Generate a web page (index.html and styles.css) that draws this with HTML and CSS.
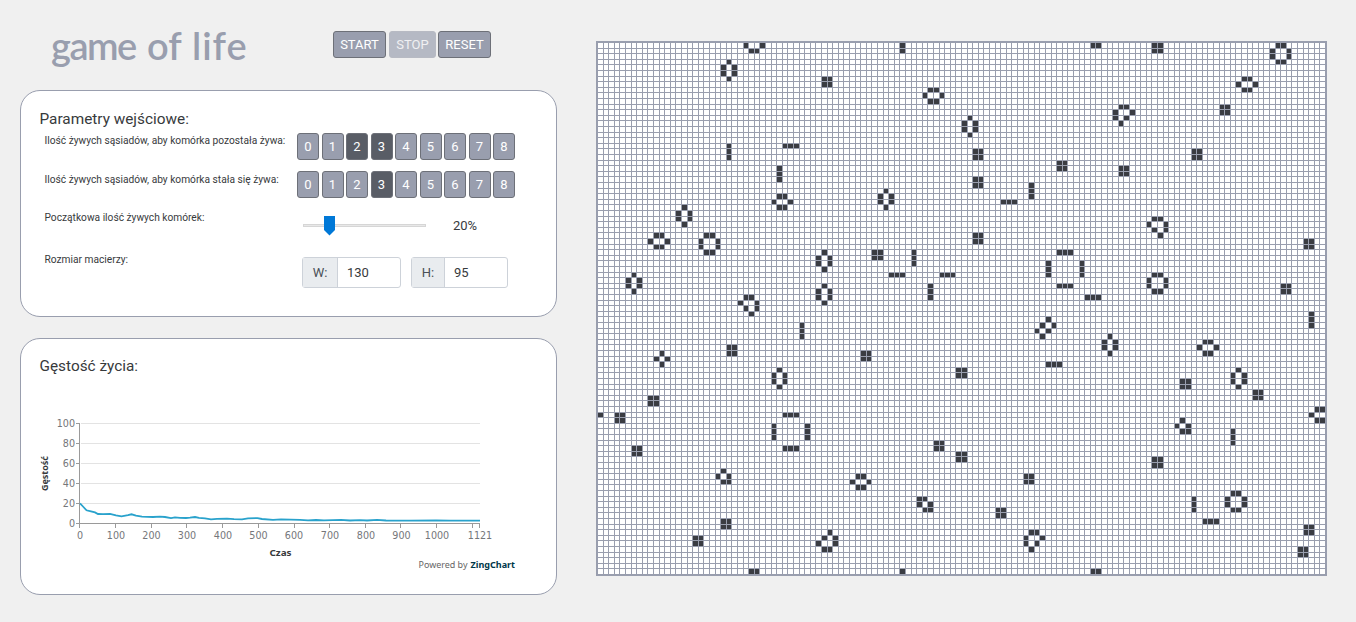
FILE: index.html
```html
<!DOCTYPE html>
<html lang="pl">
<head>
<meta charset="utf-8">
<title>game of life</title>
<link rel="stylesheet" href="styles.css">
</head>
<body>
<div class="page">
  <div class="side">
    <header class="top">
      <h1 class="logo"><span class="w1">game</span><span class="w2">of</span><span class="w3">life</span></h1>
      <div class="actions">
        <button class="btn start">START</button>
        <button class="btn stop" disabled>STOP</button>
        <button class="btn reset">RESET</button>
      </div>
    </header>

    <section class="panel params">
      <h2 class="heading">Parametry wejściowe:</h2>
      <div class="row survive">
        <span class="label">Ilość żywych sąsiadów, aby komórka pozostała żywa:</span>
        <div class="digits">
          <button class="digit">0</button><button class="digit">1</button><button class="digit on">2</button><button class="digit on">3</button><button class="digit">4</button><button class="digit">5</button><button class="digit">6</button><button class="digit">7</button><button class="digit">8</button>
        </div>
      </div>
      <div class="row birth">
        <span class="label">Ilość żywych sąsiadów, aby komórka stała się żywa:</span>
        <div class="digits">
          <button class="digit">0</button><button class="digit">1</button><button class="digit">2</button><button class="digit on">3</button><button class="digit">4</button><button class="digit">5</button><button class="digit">6</button><button class="digit">7</button><button class="digit">8</button>
        </div>
      </div>
      <div class="row density">
        <span class="label">Początkowa ilość żywych komórek:</span>
        <svg class="slider" width="124" height="20" viewBox="0 0 124 20">
          <rect x="0.5" y="8.5" width="122" height="2" fill="#e8e8e8" stroke="#d6d6d6"/>
          <path d="M21 0H32V14L26.5 19.5L21 14Z" fill="#0078d7"/>
        </svg>
        <span class="percent">20%</span>
      </div>
      <div class="row size">
        <span class="label">Rozmiar macierzy:</span>
        <div class="group gw"><span class="addon">W:</span><span class="field">130</span></div>
        <div class="group gh"><span class="addon">H:</span><span class="field">95</span></div>
      </div>
    </section>

    <section class="panel life">
      <h2 class="heading">Gęstość życia:</h2>
      <svg class="chart" width="490" height="170" viewBox="36 410 490 170">
        <path class="guide" d="M81 423.5H480M81 443.5H480M81 463.5H480M81 483.5H480M81 503.5H480"/>
        <path class="axis" d="M79.5 423V524M76 423.5H79M76 443.5H79M76 463.5H79M76 483.5H79M76 503.5H79M76 523.5H480M79.5 524V528M115.5 524V528M151.5 524V528M186.5 524V528M222.5 524V528M258.5 524V528M294.5 524V528M329.5 524V528M365.5 524V528M400.5 524V528M436.5 524V528M472.5 524V528M479.5 524V528"/>
        <polyline class="series" points="80,503.3 83,506.5 86.5,510.3 91,511.3 95,512.4 98,514 103,514.2 110,513.9 116,515.3 121.5,516.4 128,515.2 131.5,514.3 136,515.7 142,516.6 153,517 160,516.7 165,517 171,518.2 175,517.4 180,517.9 186,518 190,517.7 195,517 199,517.9 205,518.4 211,519.4 217,518.9 227,518.7 234,519.2 242,519.3 248,518.4 257.5,518.1 262,519 273,519.9 281,519.3 300,519.8 308,520.3 316,520 324,520.4 341,519.8 350,520.5 360,520.1 367,520.5 377,519.9 386,520.5 410,520.6 436,520.3 450,520.6 480,520.6"/>
        <g class="tick end">
          <text x="75" y="427">100</text><text x="75" y="447">80</text><text x="75" y="467">60</text><text x="75" y="487">40</text><text x="75" y="507">20</text><text x="75" y="527">0</text>
        </g>
        <g class="tick mid">
          <text x="80" y="539">0</text><text x="116" y="539">100</text><text x="151.5" y="539">200</text><text x="187" y="539">300</text><text x="223" y="539">400</text><text x="258.5" y="539">500</text><text x="294" y="539">600</text><text x="330" y="539">700</text><text x="366" y="539">800</text><text x="401.5" y="539">900</text><text x="437" y="539">1000</text><text x="480" y="539">1121</text>
        </g>
        <text class="caption" x="280.5" y="556" textLength="22" lengthAdjust="spacingAndGlyphs">Czas</text>
        <text class="caption" transform="translate(47.5 473.5) rotate(-90)" textLength="35" lengthAdjust="spacingAndGlyphs">Gęstość</text>
        <text class="credit" x="418.5" y="568" textLength="49" lengthAdjust="spacingAndGlyphs">Powered by</text>
        <text class="credit brand" x="470.5" y="568" textLength="44.5" lengthAdjust="spacingAndGlyphs">ZingChart</text>
      </svg>
    </section>
  </div>
  <svg class="board" id="board" width="731" height="535" shape-rendering="crispEdges"></svg>
</div>
<script src="board.js"></script>
</body>
</html>
```
FILE: styles.css
```css
* { box-sizing: border-box; }
body {
  margin: 0;
  background: #f0f0f0;
  color: #373a3c;
  font-family: Roboto, sans-serif;
}
.page {
  display: flex;
  align-items: flex-start;
  height: 622px;
  overflow: hidden;
}
.side { width: 557px; padding-left: 20px; flex: none; }
.top {
  display: flex;
  height: 90px;
  padding: 0 0 0 31px;
}
.logo {
  display: flex;
  width: 282px;
  margin: 0;
  padding-top: 22px;
  font: 600 38px/46px Lato, sans-serif;
  color: #999eae;
}
.w1 { width: 96px; letter-spacing: -1.5px; }
.w2 { width: 45px; }
.w3 { letter-spacing: 1px; }
.actions { display: flex; padding-top: 31px; }
.btn {
  height: 27px;
  padding: 0;
  border: 1px solid #6d7078;
  border-radius: 3px;
  background: #999eae;
  color: #fff;
  font: 13px/25px Roboto, sans-serif;
}
.start { width: 53px; margin-right: 3px; }
.stop { width: 47px; margin-right: 2px; border-color: #b7bac3; background: #b5b9c4; color: #f0f0f2; }
.reset { width: 53px; }

.panel {
  width: 537px;
  border: 1px solid #999eae;
  border-radius: 20px;
  background: #fff;
}
.params { height: 227px; padding: 19px 0 0 18.5px; }
.life { height: 257px; margin-top: 21px; padding: 18px 0 0 15px; }
.heading {
  margin: 0;
  font-size: 15.35px;
  font-weight: 400;
  line-height: 18px;
}
.life .heading { padding-left: 3.5px; }
.row { display: flex; padding-left: 5px; align-items: flex-start; }
.label { width: 252.5px; font-size: 10.2px; line-height: 14px; white-space: nowrap; }
.survive { height: 39px; padding-top: 5px; }
.birth { height: 38px; padding-top: 4px; }
.survive .label { padding-top: 1px; }
.birth .label { padding-top: 2px; }
.digits { display: flex; gap: 2.5px; }
.digit {
  width: 22px;
  height: 27px;
  padding: 0;
  border: 1px solid #6d7078;
  border-radius: 3px;
  background: #999eae;
  color: #fff;
  font: 13px/25px Roboto, sans-serif;
}
.digit.on { background: #595d66; border-color: #6d7078; }
.density { height: 43px; padding-top: 6px; }
.slider { display: block; margin: 5px 0 0 6px; }
.percent { margin-left: 26px; padding-top: 7px; font-size: 13px; line-height: 16px; }
.size { padding-top: 5px; }
.group {
  display: flex;
  height: 31px;
  margin-top: 4px;
  border: 1px solid #cdd2d9;
  border-radius: 3px;
  font-size: 13px;
  line-height: 29px;
}
.gw { width: 99px; margin-left: 5px; }
.gh { width: 97px; margin-left: 10px; }
.addon {
  width: 35px;
  border-right: 1px solid #cdd2d9;
  background: #e9ecef;
  text-align: center;
  color: #495057;
}
.gh .addon { width: 33px; }
.field { padding-left: 9px; }

.chart { display: block; margin-top: 35px; }
.guide { stroke: #e3e3e3; fill: none; }
.axis { stroke: #9a9a9a; fill: none; }
.series { fill: none; stroke: #29a2cc; stroke-width: 1.8; }
.chart text { font-family: "DejaVu Sans", "Noto Sans", sans-serif; font-size: 9.6px; }
.tick { fill: #75767a; }
.end { text-anchor: end; }
.mid, .caption { text-anchor: middle; }
.chart .caption { font-family: "Noto Sans", sans-serif; font-size: 9.6px; font-weight: 700; fill: #373a3c; }
.chart .credit { font-family: "Noto Sans", sans-serif; font-size: 9.6px; fill: #666; }
.chart .brand { font-weight: 700; fill: #003849; }
.board { display: block; flex: none; margin: 41px 0 0 39px; }
```
FILE: board.js
```javascript
const COLS = 130, ROWS = 95, PITCH = 5.6, EDGE = 2;

const shapes = {
  block: ['##', '##'],
  pair: ['##'],
  col: ['#', '#', '#'],
  row: ['###'],
  hiveV: ['.#.', '#.#', '#.#', '.#.'],
  hiveH: ['.##.', '#..#', '.##.'],
  pond: ['.##.', '#..#', '#..#', '.##.'],
  loafL: ['.##.', '#..#', '#.#.', '.#..'],
  loafR: ['.##.', '#..#', '.#.#', '..#.'],
  loafB: ['..#.', '.#.#', '#..#', '.##.'],
  boat: ['.#.', '#.#', '.##'],
  tub: ['.#.', '#.#', '.#.'],
  ship: ['##.', '#.#', '.##'],
  barge: ['..#.', '.#.#', '#.#.', '.#..'],
  cup: ['.##.', '#..#', '.##.']
};

const placed = {
  block: [[40,6],[67,19],[67,24],[82,21],[99,0],[111,11],[106,19],[93,22],[23,54],[9,63],[67,34],
    [49,37],[47,55],[64,58],[126,35],[122,43],[104,60],[117,62],[3,66],[6,72],[60,71],[64,73],
    [99,74],[76,77],[71,83],[22,85],[17,88],[126,86],[125,90],[88,94]],
  pair: [[27,94],[27,1]],
  col: [[23,18],[32,22],[54,94],[77,25],[36,50],[56,37],[59,43],[80,39],[86,39],[127,48],[31,68],
    [37,68],[113,69],[106,81]],
  row: [[33,18],[72,28],[52,41],[61,41],[82,37],[82,43],[80,57],[87,45],[33,66],[33,72],[108,85]],
  hiveV: [[22,3],[14,29],[65,13],[50,26],[5,41],[39,37],[39,43],[31,58],[90,52],[113,58]],
  hiveH: [[31,27],[58,8],[114,6],[9,34],[107,53],[45,77],[127,65],[26,94]],
  pond: [[120,0],[18,34],[98,41],[112,80]],
  loafL: [[92,11],[76,87]],
  loafR: [[25,45],[98,31]],
  loafB: [[39,87]],
  boat: [[103,67],[21,76]],
  tub: [[10,55]],
  ship: [[57,81]],
  barge: [[78,49]]
};

// The world is a torus: coordinates past an edge continue on the other side.
const alive = new Set();
for (const [name, list] of Object.entries(placed)) {
  for (const [c, r] of list) {
    shapes[name].forEach((line, dy) => [...line].forEach((ch, dx) => {
      if (ch === '#') alive.add(((r + dy) % ROWS) * COLS + ((c + dx) % COLS));
    }));
  }
}

const at = n => EDGE + Math.round(n * PITCH);
const rect = (x, y, w, h) => `M${x} ${y}h${w}v${h}h${-w}z`;
let open = '', live = '';
for (let r = 0; r < ROWS; r++) {
  for (let c = 0; c < COLS; c++) {
    const x = at(c), y = at(r);
    const d = rect(x, y, at(c + 1) - 1 - x, at(r + 1) - 1 - y);
    if (alive.has(r * COLS + c)) live += d; else open += d;
  }
}
document.getElementById('board').innerHTML =
  `<rect width="731" height="535" fill="#999eae"/><path d="${open}" fill="#fff"/><path d="${live}" fill="#3a3c42"/>`;
```
